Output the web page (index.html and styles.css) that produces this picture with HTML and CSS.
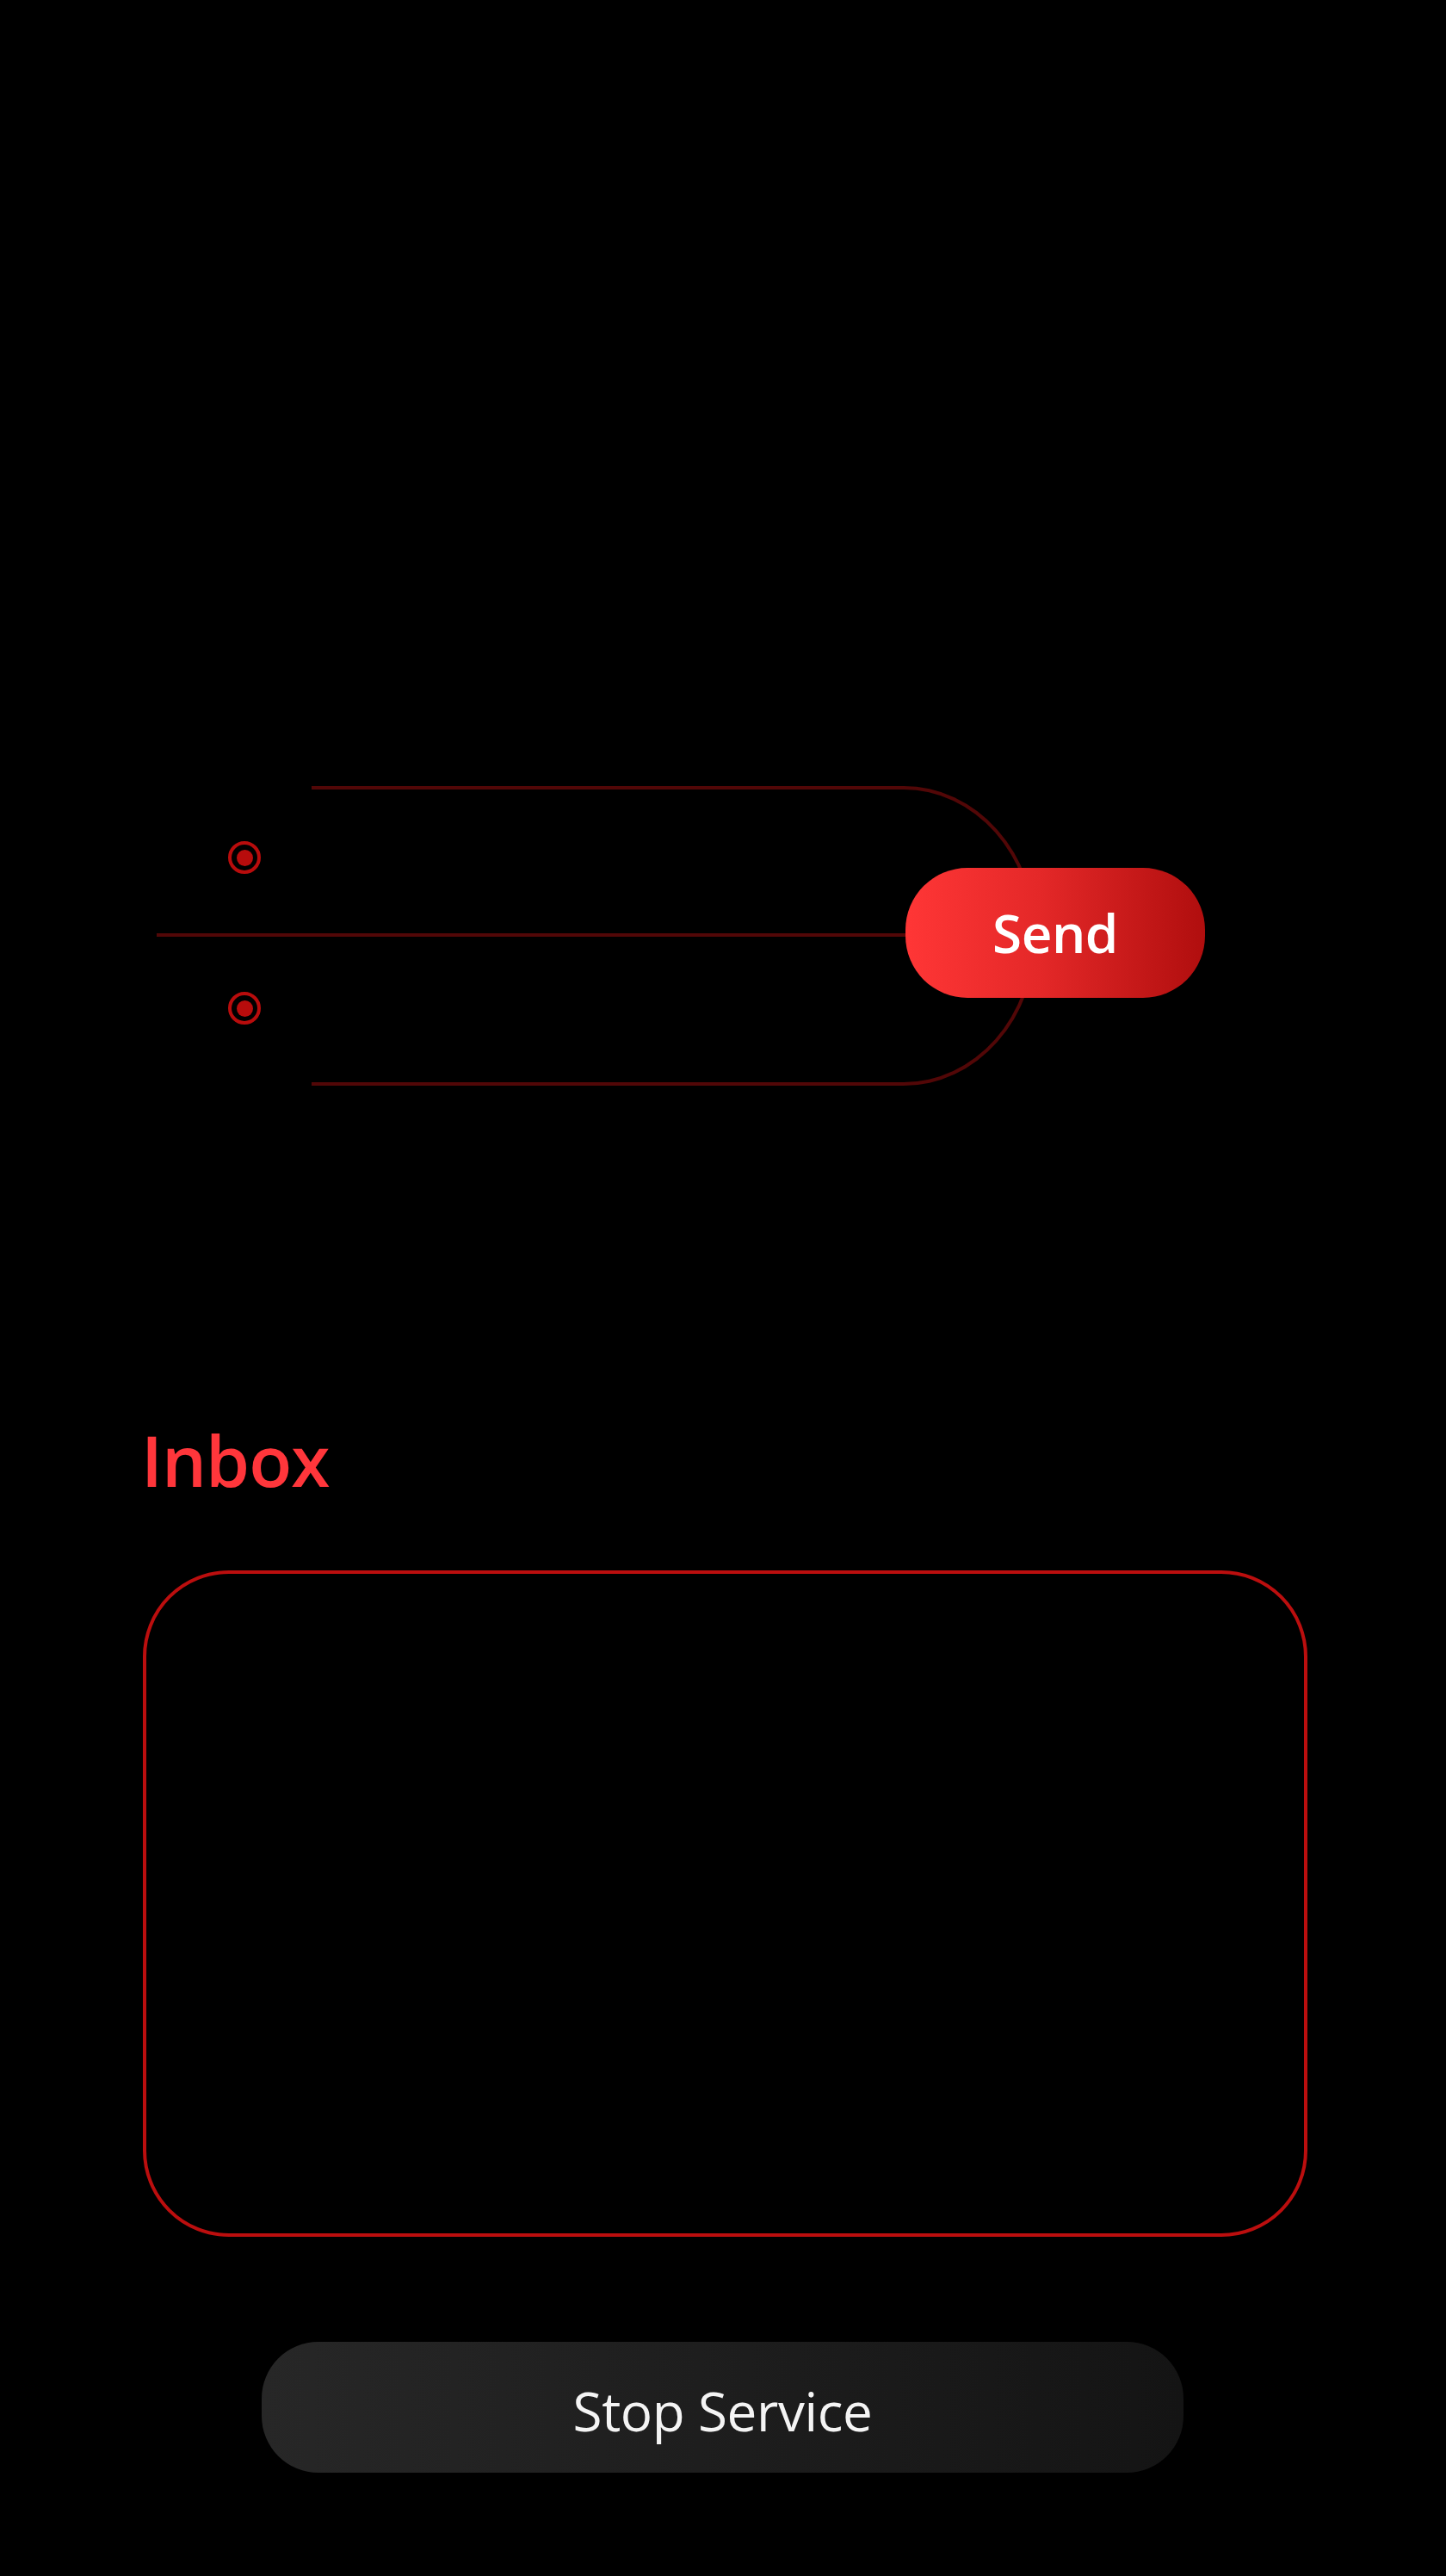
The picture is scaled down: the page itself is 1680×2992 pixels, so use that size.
FILE: index.html
```html
<!DOCTYPE html>
<html lang="en">
<head>
<meta charset="utf-8">
<title>Messenger</title>
<link rel="stylesheet" href="styles.css">
</head>
<body>
<main class="page">
  <section class="diagram">
    <div class="rail-shape"></div>
    <div class="rail-mid"></div>
    <span class="dot dot-top"></span>
    <span class="dot dot-bottom"></span>
    <button class="send-btn" type="button">Send</button>
  </section>

  <section class="inbox">
    <h2 class="inbox-title">Inbox</h2>
    <div class="inbox-box"></div>
  </section>

  <div class="actions">
    <button class="stop-btn" type="button">Stop Service</button>
  </div>
</main>
</body>
</html>
```

FILE: styles.css
```css
html, body {
  margin: 0;
  padding: 0;
  background: #000;
}

body {
  font-family: "Open Sans", "Noto Sans", "Liberation Sans", sans-serif;
  color: #fff;
}

.page {
  width: 1680px;
  min-height: 2992px;
  display: flex;
  flex-direction: column;
}

/* ---------- diagram ---------- */
.diagram {
  position: relative;
  height: 370px;
  margin-top: 900px;
}

.rail-shape {
  position: absolute;
  left: 362px;
  top: 13px;
  width: 842px;
  height: 348px;
  box-sizing: border-box;
  border: 4px solid #520707;
  border-left: none;
  border-radius: 0 154px 154px 0 / 0 174px 174px 0;
}

.rail-mid {
  position: absolute;
  left: 182px;
  top: 184px;
  width: 872px;
  height: 4px;
  background: #520707;
}

.dot {
  position: absolute;
  left: 265px;
  width: 38px;
  height: 38px;
  box-sizing: border-box;
  border: 4.5px solid #b80c0c;
  border-radius: 50%;
  display: flex;
  align-items: center;
  justify-content: center;
}

.dot::after {
  content: "";
  width: 19px;
  height: 19px;
  border-radius: 50%;
  background: #b80c0c;
}

.dot-top { top: 77px; }
.dot-bottom { top: 252px; }

.send-btn {
  position: absolute;
  left: 1052px;
  top: 108px;
  width: 348px;
  height: 151px;
  border: none;
  border-radius: 72px;
  background: linear-gradient(90deg, #ff3636 0%, #e42828 45%, #b00e0e 100%);
  color: #fff;
  font-family: inherit;
  font-weight: 600;
  font-size: 62px;
  letter-spacing: -0.5px;
  padding: 0 0 2px;
  cursor: pointer;
}

/* ---------- inbox ---------- */
.inbox {
  display: flex;
  flex-direction: column;
  margin-top: 369px;
  padding-left: 166px;
}

.inbox-title {
  margin: 0 0 0 -2px;
  font-size: 82px;
  font-weight: 600;
  line-height: 112px;
  color: #ff363b;
  letter-spacing: -1px;
}

.inbox-box {
  margin-top: 73px;
  width: 1353px;
  height: 774px;
  box-sizing: border-box;
  border: 4px solid #bb0e0e;
  border-radius: 100px;
}

/* ---------- actions ---------- */
.actions {
  display: flex;
  padding-left: 304px;
  margin-top: 122px;
}

.stop-btn {
  width: 1071px;
  height: 152px;
  border: none;
  border-radius: 66px;
  background: linear-gradient(90deg, #272727 0%, #141414 100%);
  color: #f4f4f4;
  font-family: inherit;
  font-weight: 400;
  font-size: 62px;
  letter-spacing: -0.4px;
  padding: 8px 0 0;
  cursor: pointer;
}
```
